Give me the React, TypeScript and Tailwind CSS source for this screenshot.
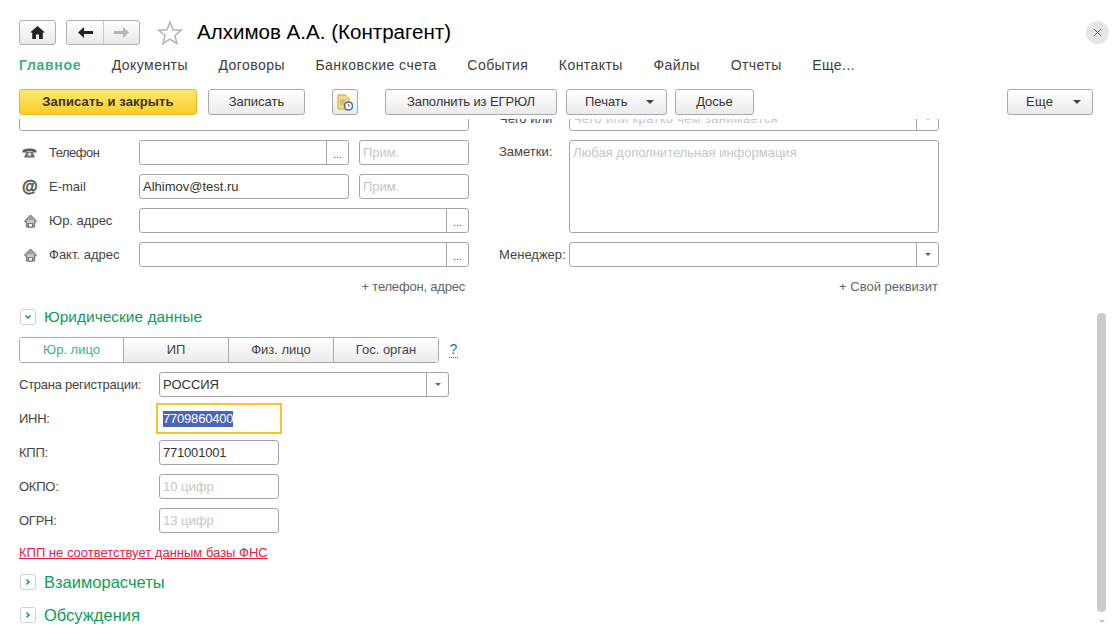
import type { ReactNode } from "react";

const tabs = ["Документы", "Договоры", "Банковские счета", "События", "Контакты", "Файлы", "Отчеты", "Еще..."];

function Arrow({ small }: { small?: boolean }) {
    return (
        <svg width={small ? 6 : 8} height={small ? 3 : 4} viewBox="0 0 8 4" preserveAspectRatio="none" className="shrink-0">
            <path d="M0 0h8L4 4z" fill={small ? "#666" : "#444"} />
        </svg>
    );
}

function Btn({ children, className }: { children: ReactNode; className: string }) {
    return (
        <div className={"flex h-[26px] items-center rounded-[3px] border border-[#a9a9a9] bg-gradient-to-b from-white to-[#ebebeb] text-[13px] text-[#333] " + className}>
            {children}
        </div>
    );
}

function Field({
    className,
    children,
    side,
    placeholder,
}: {
    className: string;
    children?: ReactNode;
    side?: "dots" | "arrow";
    placeholder?: boolean;
}) {
    return (
        <div className={"flex h-[25px] shrink-0 items-stretch rounded-[3px] border border-[#a5a5a5] bg-white text-[13px] " + className}>
            <div className={"flex min-w-0 flex-1 items-center overflow-hidden whitespace-nowrap pl-[3px] " + (placeholder ? "text-[#c6c6c6]" : "text-[#333]")}>
                {children}
            </div>
            {side && (
                <div className="flex w-[22px] items-center justify-center border-l border-[#a5a5a5] text-[#555]">
                    {side === "dots" ? <span className="mt-[3px] text-[11px]">...</span> : <Arrow small />}
                </div>
            )}
        </div>
    );
}

function House() {
    return (
        <svg width="13" height="14" viewBox="0 0 14 15" className="ml-[2px]">
            <path d="M7 1 L1 7 V8.5 H2.5 V14 H11.5 V8.5 H13 V7 Z" fill="#a0a0a0" stroke="#6e6e6e" strokeWidth="1" />
            <path d="M3.5 7.5h7M3.5 9h7" stroke="#fff" strokeWidth="0.8" />
            <rect x="5" y="10" width="4" height="4" fill="#fff" stroke="#666" strokeWidth="1" />
        </svg>
    );
}

function Phone() {
    return (
        <svg width="15" height="11" viewBox="0 0 15 11">
            <path d="M0.5 4 C0.5 0.5 14.5 0.5 14.5 4 V5.5 H10.5 V4 H4.5 V5.5 H0.5 Z" fill="#5a5a5a" />
            <path d="M4.5 4.5 H10.5 L13 10.5 H2 Z" fill="#707070" />
            <circle cx="7.5" cy="7.2" r="1.7" fill="#ddd" />
        </svg>
    );
}

function ContactRow({ icon, label, children }: { icon: ReactNode; label: ReactNode; children: ReactNode }) {
    return (
        <div className="flex h-[25px] items-center">
            <div className="flex w-[30px] shrink-0 items-center pl-[3px]">{icon}</div>
            <div className="w-[90px] shrink-0 text-[13px] text-[#444]">{label}</div>
            {children}
        </div>
    );
}

function Toggle({ open }: { open?: boolean }) {
    return (
        <div className="ml-px flex h-[16px] w-[16px] shrink-0 items-center justify-center rounded-[3px] border border-[#cfcfcf] bg-white">
            <svg width="8" height="8" viewBox="0 0 8 8">
                <path d={open ? "M1.5 2.5 L4 5 L6.5 2.5" : "M2.5 1.5 L5 4 L2.5 6.5"} fill="none" stroke="#0c8a50" strokeWidth="1.4" />
            </svg>
        </div>
    );
}

function Section({ title, open, className }: { title: string; open?: boolean; className: string }) {
    return (
        <div className={"flex h-[16px] items-center gap-[8px] text-[#0f9d58] " + className}>
            <Toggle open={open} />
            <span className={open ? "pb-[1px]" : ""}>{title}</span>
        </div>
    );
}

function RegRow({ label, children }: { label: string; children: ReactNode }) {
    return (
        <div className="flex h-[25px] items-center">
            <div className="w-[140px] shrink-0 text-[13px] tracking-[-0.25px] text-[#444]">{label}</div>
            {children}
        </div>
    );
}

export default function App() {
    return (
        <div className="relative flex h-[641px] w-[1119px] flex-col overflow-hidden bg-white font-['Liberation_Sans',Arial,sans-serif]">
            <div className="h-[119px] shrink-0 pl-[19px] pt-[19px]">
                <div className="flex h-[26px] items-center">
                    <div className="flex h-[25px] w-[37px] items-center justify-center rounded-[3px] border border-[#b0b0b0] bg-gradient-to-b from-white to-[#e9e9e9]">
                        <svg width="15" height="13" viewBox="0 0 15 13">
                            <path d="M7.5 0 L15 6.5 H12.8 V13 H9 V8.5 H6 V13 H2.2 V6.5 H0 Z" fill="#222" />
                        </svg>
                    </div>
                    <div className="ml-[10px] flex h-[25px] w-[74px] rounded-[3px] border border-[#b0b0b0] bg-gradient-to-b from-white to-[#e9e9e9]">
                        <div className="flex w-[37px] items-center justify-center border-r border-[#c8c8c8]">
                            <svg width="15" height="11" viewBox="0 0 15 11">
                                <path d="M6 0 L0 5.5 L6 11 V7 H15 V4 H6 Z" fill="#222" />
                            </svg>
                        </div>
                        <div className="flex flex-1 items-center justify-center">
                            <svg width="15" height="11" viewBox="0 0 15 11">
                                <path d="M9 0 L15 5.5 L9 11 V7 H0 V4 H9 Z" fill="#b5b5b5" />
                            </svg>
                        </div>
                    </div>
                    <svg width="26" height="25" viewBox="0 0 26 25" className="ml-[17px]">
                        <path d="M13 2 L16 9.7 L24.3 10.2 L17.9 15.5 L20 23.6 L13 19.1 L6 23.6 L8.1 15.5 L1.7 10.2 L10 9.7 Z" fill="#fff" stroke="#b3b3b3" strokeWidth="1.5" />
                    </svg>
                    <div className="ml-[14px] text-[20.55px] text-black">Алхимов А.А. (Контрагент)</div>
                    <div className="ml-auto mr-[10px] flex h-[23px] w-[23px] items-center justify-center rounded-full bg-[#e6e6e6]">
                        <svg width="9" height="9" viewBox="0 0 9 9">
                            <path d="M1 1 L8 8 M8 1 L1 8" stroke="#666" strokeWidth="1" />
                        </svg>
                    </div>
                </div>
                <div className="mt-[10px] flex h-[20px] items-center gap-[30.5px] text-[14px] tracking-[0.45px] text-[#3d3d3d]">
                    <span className="font-bold tracking-[0.7px] text-[#3fae7c]">Главное</span>
                    {tabs.map((t) => (
                        <span key={t}>{t}</span>
                    ))}
                </div>
                <div className="mt-[14px] flex items-center">
                    <div className="flex h-[26px] w-[178px] items-center justify-center rounded-[3px] border border-[#e6b92c] bg-gradient-to-b from-[#fde96e] to-[#fdcd1c] text-[13px] font-bold tracking-[0.15px] text-[#3a3320]">
                        Записать и закрыть
                    </div>
                    <Btn className="ml-[11px] w-[97px] justify-center">Записать</Btn>
                    <Btn className="ml-[27px] w-[26px] justify-center">
                        <svg width="16" height="17" viewBox="0 0 16 17">
                            <path d="M1 1 H8.5 L12 4.5 V15 H1 Z" fill="#f5dc8e" stroke="#c9a441" strokeWidth="1" />
                            <path d="M3 6h6M3 8h5M3 10h4" stroke="#b8923a" strokeWidth="0.8" />
                            <circle cx="11.5" cy="12" r="4" fill="#fff" stroke="#3f6fb5" strokeWidth="1.6" />
                            <path d="M11.5 10 V12 H13" stroke="#c0392b" strokeWidth="0.9" fill="none" />
                        </svg>
                    </Btn>
                    <Btn className="ml-[27px] w-[172px] justify-center tracking-[-0.1px]">Заполнить из ЕГРЮЛ</Btn>
                    <Btn className="ml-[9px] w-[101px] pl-[18px]">
                        Печать
                        <span className="ml-[18px]">
                            <Arrow />
                        </span>
                    </Btn>
                    <Btn className="ml-[8px] w-[79px] justify-center">Досье</Btn>
                    <Btn className="ml-auto mr-[26px] w-[86px] pl-[18px] tracking-[0.25px]">
                        Еще
                        <span className="ml-[20px]">
                            <Arrow />
                        </span>
                    </Btn>
                </div>
            </div>

            <div className="min-h-0 flex-1 overflow-hidden pl-[19px]">
                <div className="-mt-[13px] flex gap-[30px]">
                    <div className="flex w-[450px] shrink-0 flex-col gap-[9px]">
                        <Field className="w-[450px]" />
                        <ContactRow icon={<Phone />} label={<span className="tracking-[-0.5px]">Телефон</span>}>
                            <Field className="w-[210px]" side="dots" />
                            <Field className="ml-[10px] w-[110px]" placeholder>
                                Прим.
                            </Field>
                        </ContactRow>
                        <ContactRow icon={<span className="text-[16px] font-bold leading-none text-[#555] [-webkit-text-stroke:0.5px_#555]">@</span>} label="E-mail">
                            <Field className="w-[210px]">Alhimov@test.ru</Field>
                            <Field className="ml-[10px] w-[110px]" placeholder>
                                Прим.
                            </Field>
                        </ContactRow>
                        <ContactRow icon={<House />} label="Юр. адрес">
                            <Field className="w-[330px]" side="dots" />
                        </ContactRow>
                        <ContactRow icon={<House />} label="Факт. адрес">
                            <Field className="w-[330px]" side="dots" />
                        </ContactRow>
                        <div className="mt-[1px] h-[20px] pr-[4px] text-right text-[13px] tracking-[-0.2px] text-[#666]">+ телефон, адрес</div>
                    </div>
                    <div className="flex w-[440px] shrink-0 flex-col gap-[9px]">
                        <div className="flex h-[25px] items-center">
                            <div className="w-[70px] shrink-0 text-[13px] text-[#444]">Чего или</div>
                            <Field className="w-[370px] tracking-[0.3px]" side="arrow" placeholder>
                                Чего или кратко чем занимается
                            </Field>
                        </div>
                        <div className="flex h-[93px]">
                            <div className="w-[70px] shrink-0 pt-[2px] text-[13px] text-[#444]">Заметки:</div>
                            <div className="w-[370px] rounded-[3px] border border-[#a5a5a5] pl-[3px] pt-[2px] text-[13px] text-[#c6c6c6]">
                                Любая дополнительная информация
                            </div>
                        </div>
                        <div className="flex h-[25px] items-center">
                            <div className="w-[70px] shrink-0 text-[13px] text-[#444]">Менеджер:</div>
                            <Field className="w-[370px]" side="arrow" />
                        </div>
                        <div className="mt-[1px] h-[20px] pr-px text-right text-[13px] text-[#666]">+ Свой реквизит</div>
                    </div>
                </div>

                <Section className="mt-[12px] text-[15.5px]" title="Юридические данные" open />

                <div className="mt-[12px] flex items-center">
                    <div className="flex h-[26px] w-[420px] rounded-[3px] border border-[#a9a9a9] text-[13px] text-[#444]">
                        <div className="flex w-[104px] items-center justify-center border-r border-[#a9a9a9] bg-white text-[#3fae85]">Юр. лицо</div>
                        <div className="flex w-[105px] items-center justify-center border-r border-[#a9a9a9] bg-gradient-to-b from-white to-[#ebebeb]">ИП</div>
                        <div className="flex w-[105px] items-center justify-center border-r border-[#a9a9a9] bg-gradient-to-b from-white to-[#ebebeb]">Физ. лицо</div>
                        <div className="flex flex-1 items-center justify-center bg-gradient-to-b from-white to-[#ebebeb]">Гос. орган</div>
                    </div>
                    <span className="ml-[10px] w-[9px] border-b border-dotted border-[#2a6db5] text-center text-[14px] leading-[15px] text-[#2a6db5]">?</span>
                </div>

                <div className="mt-[9px] flex flex-col gap-[9px]">
                    <RegRow label="Страна регистрации:">
                        <Field className="w-[290px]" side="arrow">
                            РОССИЯ
                        </Field>
                    </RegRow>
                    <RegRow label="ИНН:">
                        <div className="-ml-[3px] flex h-[31px] w-[126px] items-center border-[2px] border-[#f5c524] pl-[5px] text-[13px] tracking-[-0.2px]">
                            <span className="bg-[#4b63b9] leading-[16px] text-white">7709860400</span>
                        </div>
                    </RegRow>
                    <RegRow label="КПП:">
                        <Field className="w-[120px] tracking-[-0.2px]">771001001</Field>
                    </RegRow>
                    <RegRow label="ОКПО:">
                        <Field className="w-[120px]" placeholder>
                            10 цифр
                        </Field>
                    </RegRow>
                    <RegRow label="ОГРН:">
                        <Field className="w-[120px]" placeholder>
                            13 цифр
                        </Field>
                    </RegRow>
                </div>

                <div className="mt-[11px] h-[18px] text-[13px] leading-[18px] text-[#e8203c] underline">КПП не соответствует данным базы ФНС</div>

                <Section className="mt-[12px] text-[16.5px]" title="Взаиморасчеты" />
                <Section className="mt-[17px] text-[16.5px]" title="Обсуждения" />
            </div>

            <div className="absolute left-[1097px] top-[313px] h-[299px] w-[9px] rounded-[4px] bg-[#cbcbcb]" />
            <svg width="6" height="3" viewBox="0 0 6 3" className="absolute left-[1099px] top-[620px]">
                <path d="M0 0h6L3 3z" fill="#c4c4c4" />
            </svg>
        </div>
    );
}
